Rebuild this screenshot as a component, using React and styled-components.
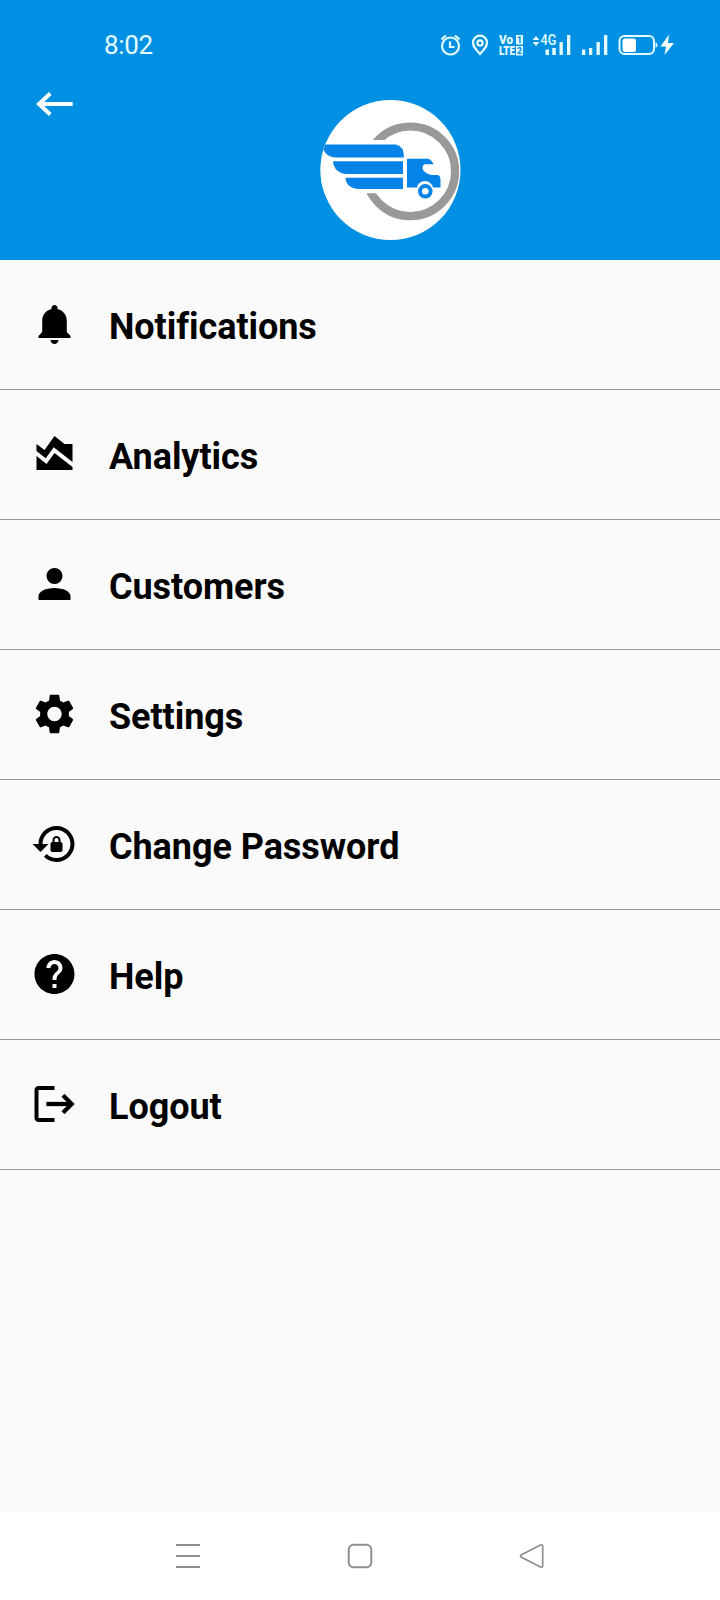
import React, { Component } from 'react';
import styled, { createGlobalStyle } from 'styled-components';
import { MdSettings, MdHelp } from 'react-icons/md';

const colors = {
    primary: '#0090e3',
    status: '#e4fcff',
    background: '#fafafa',
    divider: '#979797',
    nav: '#8e8e8e'
};

const GlobalStyle = createGlobalStyle`
    body {
        margin: 0;
        background: ${colors.background};
        font-family: Roboto, "Liberation Sans", sans-serif;
    }
`;

const Screen = styled.div`
    display: flex;
    flex-direction: column;
    width: 720px;
    height: 1600px;
    overflow: hidden;
    background: ${colors.background};
`;

const Header = styled.header`
    display: flex;
    flex-direction: column;
    height: 260px;
    background: ${colors.primary};
`;

const StatusBar = styled.div`
    display: flex;
    align-items: center;
    justify-content: space-between;
    box-sizing: border-box;
    height: 90px;
    padding: 0 44px 0 104px;
    color: ${colors.status};
`;

const Time = styled.span`
    font-size: 26px;
    line-height: 30px;
    letter-spacing: -0.35px;
`;

const StatusIcons = styled.svg`
    display: block;
    width: 236px;
    height: 40px;
    fill: currentColor;
`;

const TitleBar = styled.div`
    display: flex;
    align-items: flex-start;
    padding-left: 30px;
`;

const BackButton = styled.button`
    display: flex;
    width: 48px;
    height: 28px;
    margin: 0 242px 0 0;
    padding: 0;
    border: 0;
    background: none;
    color: #fff;
`;

const LogoImage = styled.svg`
    display: block;
    width: 141px;
    height: 141px;
    margin-top: 10px;
`;

const Menu = styled.ul`
    flex: 1;
    margin: 0;
    padding: 0;
    list-style: none;
`;

const MenuItem = styled.li`
    display: flex;
    align-items: flex-start;
    box-sizing: border-box;
    height: 130px;
    padding: 40px 0 0 30px;
    border-bottom: 1px solid ${colors.divider};
    color: #000;

    svg {
        display: block;
        width: 48px;
        height: 48px;
        fill: currentColor;
        transform: translateX(0.5px);
    }
`;

const Label = styled.span`
    margin-left: 31px;
    padding-top: 5px;
    font-size: 36px;
    font-weight: 700;
    line-height: 44px;
    letter-spacing: -0.06px;
    font-variant-ligatures: common-ligatures;
`;

const NavBar = styled.nav`
    display: flex;
    align-items: center;
    justify-content: space-between;
    box-sizing: border-box;
    height: 88px;
    padding: 0 174px;
    background: #fff;

    svg {
        display: block;
        width: 28px;
        height: 28px;
        fill: none;
        stroke: ${colors.nav};
        stroke-width: 2;
    }
`;

const BellIcon = () => (
    <svg viewBox="0 0 24 24">
        <path d="M12 22c1.1 0 2-.9 2-2h-4c0 1.1.89 2 2 2zm6.150-6v-5.500c0-3.070-1.850-5.300-4.650-5.950V4c0-.83-.67-1.500-1.500-1.500s-1.500.67-1.500 1.500v.55C7.700 5.200 5.850 7.430 5.850 10.500V16L4 18v1h16v-1l-1.850-2z" />
    </svg>
);

const AreaChartIcon = () => (
    <svg viewBox="0 0 24 24">
        <path d="M3 13v7h18v-1.5l-9-7L8 17l-5-4zM3 7l4 3 5-7 5 4h4v8.97l-9.4-7.31-3.98 5.48L3 10.44V7z" />
    </svg>
);

const AccountIcon = () => (
    <svg viewBox="0 0 24 24">
        <path d="M12 4a4 4 0 1 1 0 8 4 4 0 0 1 0-8zm0 10c4.42 0 8 1.79 8 4v2H4v-2c0-2.21 3.58-4 8-4z" />
    </svg>
);

const LockResetIcon = () => (
    <svg viewBox="0 0 24 24">
        <path d="M13 3c-4.97 0-9 4.03-9 9H1l4 3.99L9 12H6c0-3.86 3.14-7 7-7s7 3.14 7 7-3.14 7-7 7c-1.9 0-3.62-.76-4.88-1.99L6.7 18.42C8.32 20.01 10.55 21 13 21c4.97 0 9-4.03 9-9s-4.03-9-9-9zm2 8v-1c0-1.1-.9-2-2-2s-2 .9-2 2v1c-.55 0-1 .45-1 1v3c0 .55.45 1 1 1h4c.55 0 1-.45 1-1v-3c0-.55-.45-1-1-1zm-1 0h-2v-1c0-.55.45-1 1-1s1 .45 1 1v1z" />
    </svg>
);

const LogoutIcon = () => (
    <svg viewBox="0 0 24 24">
        <path d="M12 3H4c-1.1 0-2 .9-2 2v14c0 1.1.9 2 2 2h8v-2H4V5h8V3z" />
        <path d="M17 7l-1.410 1.410L18.170 11H8v2h10.170l-2.580 2.580L17 17l5-5-5-5z" stroke="currentColor" strokeWidth="0.150" />
    </svg>
);

const Logo = () => (
    <LogoImage viewBox="0 0 141 141">
        <defs>
            <clipPath id="logo-clip">
                <circle cx="70.5" cy="70" r="70" />
            </clipPath>
        </defs>
        <circle cx="70.5" cy="70" r="70" fill="#fff" />
        <g clipPath="url(#logo-clip)">
            <circle cx="90.3" cy="71.3" r="44.8" fill="none" stroke="#999" strokeWidth="8.2" />
            <path d="M0 40H80V93.3H0Z" fill="#fff" />
            <g fill="#0583e6">
                <path d="M2 44.5H76Q84 46 84 57.5H16Q4 57 2 44.5Z" />
                <path d="M13 61.2H83V74H27Q14 73 13 61.2Z" />
                <path d="M25.5 77.7H83V89H39Q26 88 25.5 77.7Z" />
                <path d="M87 58.8H108Q112 60 113.5 64.3H104.5Q101.5 66 103 70Q107 74.5 112 75H118Q120.5 76 120.5 80V87.5H113Q111 81 105 81Q98.5 81 97 87.5H87Z" />
            </g>
            <circle cx="105.3" cy="91.3" r="5.3" fill="#fff" stroke="#0583e6" strokeWidth="4" />
        </g>
    </LogoImage>
);

const StatusIndicators = () => (
    <StatusIcons viewBox="440 25 236 40">
        {/* alarm */}
        <g fill="none" stroke="currentColor" strokeWidth="2.2">
            <circle cx="450.5" cy="46" r="8.5" />
            <path d="M450 41.5v5.5h4.5M441.5 39.3l4.5-3.8M459.5 39.3l-4.5-3.8" />
        </g>
        {/* location */}
        <g fill="none" stroke="currentColor" strokeWidth="2.2">
            <path d="M480 54c-4.5-5-7-7.7-7-11.3a7 7 0 0 1 14 0c0 3.6-2.5 6.3-7 11.3z" />
            <circle cx="480" cy="43" r="2.6" />
        </g>
        {/* volte */}
        <g fontFamily="Roboto, sans-serif" fontWeight="900" fontSize="12">
            <text x="499" y="43.8" textLength="14" lengthAdjust="spacingAndGlyphs">Vo</text>
            <text x="499" y="55" textLength="16" lengthAdjust="spacingAndGlyphs">LTE</text>
            <rect x="516" y="35" width="7" height="9.5" />
            <rect x="516" y="46" width="7" height="9.5" />
            <g fill={colors.primary} fontSize="8.5">
                <text x="517" y="42.8">1</text>
                <text x="517" y="53.8">2</text>
            </g>
        </g>
        {/* mobile data */}
        <path d="M532.5 40l3.5-4 3.5 4zM532.5 42l3.5 4 3.5-4z" />
        <text x="540.5" y="45.3" fontFamily="Roboto, sans-serif" fontSize="14" fontWeight="500" textLength="16" lengthAdjust="spacingAndGlyphs">4G</text>
        <path d="M545.5 49.5h3.5v5.5h-3.5zM552.3 48h3.5v7h-3.5zM559.5 42h3.3v13h-3.3zM567 35h3.3v20h-3.3z" />
        <path d="M582 49.5h3.3v5.5h-3.3zM589 48h3.3v7h-3.3zM596.5 42h3.3v13h-3.3zM604 35h3.3v20h-3.3z" />
        {/* battery */}
        <rect x="619.5" y="36" width="34.5" height="18" rx="5" fill="none" stroke="currentColor" strokeWidth="2" />
        <rect x="622.5" y="38.5" width="13.5" height="13.5" rx="2.5" fill="#fff" />
        <path d="M655.5 42.5q2 0 2 2.5t-2 2.5z" />
        <path d="M669 34.5l-8.5 12h5.5l-1.5 8.5 9.5-12h-6z" fill="#fff" />
    </StatusIcons>
);

const items = [
    { title: 'Notifications', Icon: BellIcon },
    { title: 'Analytics', Icon: AreaChartIcon },
    { title: 'Customers', Icon: AccountIcon },
    { title: 'Settings', Icon: MdSettings },
    { title: 'Change Password', Icon: LockResetIcon },
    { title: 'Help', Icon: MdHelp },
    { title: 'Logout', Icon: LogoutIcon }
];

class App extends Component {
    renderItems() {
        return items.map(({ title, Icon }) =>
            <MenuItem key={title}>
                <Icon />
                <Label>{title}</Label>
            </MenuItem>
        );
    }

    render() {
        return (
            <Screen>
                <GlobalStyle />
                <Header>
                    <StatusBar>
                        <Time>8:02</Time>
                        <StatusIndicators />
                    </StatusBar>
                    <TitleBar>
                        <BackButton aria-label="Back">
                            <svg width="48" height="28" viewBox="0 0 48 28" fill="none" stroke="currentColor" strokeWidth="4">
                                <path d="M42.7 14H9M20.3 3.5L9 14l11.3 10.5" />
                            </svg>
                        </BackButton>
                        <Logo />
                    </TitleBar>
                </Header>
                <Menu>{this.renderItems()}</Menu>
                <NavBar>
                    <svg viewBox="0 0 28 28"><path d="M2 3h24M2 14h24M2 25h24" /></svg>
                    <svg viewBox="0 0 28 28"><rect x="2.7" y="2.7" width="22.6" height="22.6" rx="5" /></svg>
                    <svg viewBox="0 0 28 28">
                        <path d="M3.5 12.7L22.5 3q2.2-.8 2.2 1.5v19q0 2.3-2.2 1.5L3.5 15.3q-2-1.3 0-2.6z" strokeWidth="1.7" />
                    </svg>
                </NavBar>
            </Screen>
        );
    }
}

export default App;
